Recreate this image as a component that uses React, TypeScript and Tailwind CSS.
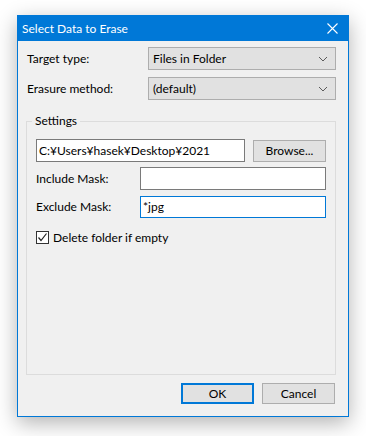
import React from "react";

const Chevron = () => (
  <svg width="10" height="6" viewBox="0 0 10 6" className="shrink-0">
    <path d="M1 1 L5 5 L9 1" fill="none" stroke="#5a5a5a" strokeWidth="1" />
  </svg>
);

const Select = ({ value }: { value: string }) => (
  <div className="w-[188px] h-[23px] border border-[#adadad] bg-[#e1e1e1] flex items-center justify-between pl-[4px] pr-[7px]">
    <span>{value}</span>
    <Chevron />
  </div>
);

export default function App() {
  return (
    <div
      className="w-[366px] h-[436px] bg-white pt-[15px] pl-[17px] text-[12px] text-black leading-none"
      style={{ fontFamily: 'Lato, "Noto Sans", sans-serif' }}
    >
      <div className="w-[332px] h-[402px] border border-[#0078d7] bg-[#f0f0f0] flex flex-col shadow-[0_6px_20px_rgba(0,0,0,0.3)]">
        {/* Title bar */}
        <div className="h-[25px] bg-[#0078d7] flex items-center justify-between pl-[4px] pr-[10px] text-white">
          <span>Select Data to Erase</span>
          <svg width="11" height="11" viewBox="0 0 11 11">
            <path d="M0.5 0.5 L10.5 10.5 M10.5 0.5 L0.5 10.5" stroke="white" strokeWidth="1.1" />
          </svg>
        </div>
        {/* Body */}
        <div className="flex-1 flex flex-col pl-[8px] pr-[12px] pt-[6px]">
          <div className="flex items-center justify-between h-[23px]">
            <span className="pl-[1px]">Target type:</span>
            <Select value="Files in Folder" />
          </div>
          <div className="flex items-center justify-between h-[23px] mt-[7px]">
            <span className="pl-[1px]">Erasure method:</span>
            <Select value="(default)" />
          </div>
          {/* Group box */}
          <div className="relative mt-[21px] h-[254px] border border-[#dcdcdc] pt-[17px] pl-[9px] pr-[9px]">
            <span className="absolute -top-[7px] left-[5px] bg-[#f0f0f0] px-[3px]">Settings</span>
            <div className="flex items-center justify-between">
              <div className="w-[209px] h-[23px] border border-[#7a7a7a] bg-white flex items-center pl-[2px]">
                C:¥Users¥hasek¥Desktop¥2021
              </div>
              <div className="w-[73px] h-[22px] border border-[#adadad] bg-[#e1e1e1] flex items-center justify-center">
                Browse...
              </div>
            </div>
            <div className="flex items-center justify-between mt-[5px]">
              <span>Include Mask:</span>
              <div className="w-[186px] h-[23px] border border-[#7a7a7a] bg-white" />
            </div>
            <div className="flex items-center justify-between mt-[6px]">
              <span>Exclude Mask:</span>
              <div className="w-[186px] h-[22px] border border-[#0078d7] bg-white flex items-center pl-[2px]">
                *jpg
              </div>
            </div>
            <div className="flex items-center mt-[13px] gap-[4px]">
              <div className="w-[13px] h-[13px] border border-[#333333] bg-white flex items-center justify-center">
                <svg width="11" height="11" viewBox="0 0 11 11">
                  <path d="M1.5 5.5 L4 8.5 L9.5 1.5" fill="none" stroke="#222" strokeWidth="1.2" />
                </svg>
              </div>
              <span>Delete folder if empty</span>
            </div>
          </div>
          {/* Buttons */}
          <div className="flex justify-end gap-[8px] mt-[8px] pr-[1px]">
            <div className="w-[73px] h-[21px] border-2 border-[#0078d7] bg-[#e1e1e1] flex items-center justify-center">
              OK
            </div>
            <div className="w-[73px] h-[21px] border border-[#adadad] bg-[#e1e1e1] flex items-center justify-center">
              Cancel
            </div>
          </div>
        </div>
      </div>
    </div>
  );
}
